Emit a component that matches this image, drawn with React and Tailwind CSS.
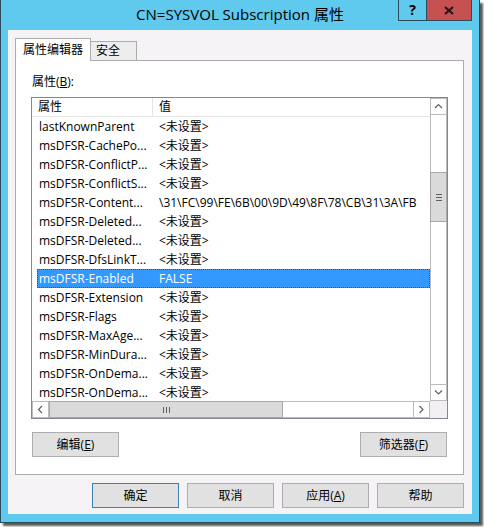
const rows = [
  ['lastKnownParent', '<未设置>'],
  ['msDFSR-CachePo...', '<未设置>'],
  ['msDFSR-ConflictP...', '<未设置>'],
  ['msDFSR-ConflictS...', '<未设置>'],
  ['msDFSR-Content...', '\\31\\FC\\99\\FE\\6B\\00\\9D\\49\\8F\\78\\CB\\31\\3A\\FB'],
  ['msDFSR-Deleted...', '<未设置>'],
  ['msDFSR-Deleted...', '<未设置>'],
  ['msDFSR-DfsLinkT...', '<未设置>'],
  ['msDFSR-Enabled', 'FALSE', true],
  ['msDFSR-Extension', '<未设置>'],
  ['msDFSR-Flags', '<未设置>'],
  ['msDFSR-MaxAge...', '<未设置>'],
  ['msDFSR-MinDura...', '<未设置>'],
  ['msDFSR-OnDema...', '<未设置>'],
  ['msDFSR-OnDema...', '<未设置>'],
];

const Chevron = ({ dir }) => {
  const pts = {
    up: '1,5 4.5,1.5 8,5',
    down: '1,1.5 4.5,5 8,1.5',
    left: '5,1 1.5,4.5 5,8',
    right: '1.5,1 5,4.5 1.5,8',
  }[dir];
  const w = dir === 'up' || dir === 'down' ? 9 : 7;
  const h = dir === 'up' || dir === 'down' ? 7 : 9;
  return (
    <svg width={w} height={h} viewBox={`0 0 ${w} ${h}`}>
      <polyline points={pts} fill="none" stroke="#606060" strokeWidth="1.2" />
    </svg>
  );
};

const Btn = ({ children, primary, className = '' }) => (
  <div
    className={`h-[25px] w-[87px] flex items-center justify-center bg-[#e1e1e1] border text-[12px] text-black ${
      primary ? 'border-[#3c7fb1]' : 'border-[#adadad]'
    } ${className}`}
  >
    {children}
  </div>
);

const App = () => {
  return (
    <div
      className="w-[484px] h-[527px] bg-white"
      style={{ fontFamily: "'Open Sans','Noto Sans CJK SC',sans-serif" }}
    >
      <div className="relative w-[480px] h-[523px] bg-[#5fc9ee] border-x border-b border-[#2b4d5e] shadow-[3px_3px_2px_rgba(0,0,0,0.65)] flex flex-col px-[7px]">
        {/* title bar */}
        <div className="h-[30px] flex items-center justify-center text-[15px] text-black pb-[1px]">
          CN=SYSVOL Subscription 属性
        </div>
        <div className="absolute top-0 right-[7px] flex">
          <div className="w-[28px] h-[21px] border-l border-b border-[#2b4d5e] flex items-center justify-center text-[14px] font-bold text-black pb-[1px]">
            ?
          </div>
          <div className="w-[46px] h-[21px] bg-[#c75050] border-x border-b border-[#2b4d5e] flex items-center justify-center">
            <svg width="10" height="9" viewBox="0 0 10 9">
              <path d="M1 1 L9 8 M9 1 L1 8" stroke="#1a1a1a" strokeWidth="2.2" />
            </svg>
          </div>
        </div>

        {/* client area */}
        <div className="w-[464px] h-[484px] bg-[#f6f3f6] flex flex-col pt-[8px]">
          {/* tabs */}
          <div className="flex items-start h-[22px] pl-[7px]">
            <div className="relative z-10 h-[23px] w-[76px] bg-white border-x border-t border-[#acacac] flex items-center pl-[7px] text-[12px] text-black">
              属性编辑器
            </div>
            <div className="mt-[3px] h-[19px] w-[46px] bg-[#eeedee] border-r border-t border-[#acacac] flex items-center pl-[5px] text-[12px] text-black">
              安全
            </div>
          </div>

          <div className="ml-[7px] w-[449px] h-[415px] bg-white border border-[#acacac] flex flex-col pt-[12px]">
            <div className="pl-[16px] leading-[18px] text-[12px] text-black">
              属性(<span className="underline">B</span>):
            </div>

            {/* list view */}
            <div className="ml-[15px] mt-[6px] w-[417px] h-[322px] border border-[#828790] flex flex-col">
              <div className="flex h-[303px]">
                <div className="w-[398px] flex flex-col overflow-hidden text-[12px] text-black">
                  <div className="h-[19px] shrink-0 flex border-b border-[#e5e5e5]">
                    <div className="w-[121px] border-r border-[#e5e5e5] pl-[6px] flex items-center">属性</div>
                    <div className="pl-[6px] flex items-center">值</div>
                  </div>
                  {rows.map(([name, value, selected], i) => (
                    <div key={i} className="h-[19px] shrink-0 pl-[5px] flex">
                      <div
                        className={`flex-1 flex items-center whitespace-nowrap overflow-hidden pt-px ${
                          selected ? 'bg-[#3399ff] text-white outline-1 outline-dotted outline-[#1e5a9a] -outline-offset-1' : ''
                        }`}
                      >
                        <div className="w-[116px] shrink-0 pl-[2px]">{name}</div>
                        <div className="pl-[6px]">{value}</div>
                      </div>
                    </div>
                  ))}
                </div>

                {/* vertical scrollbar */}
                <div className="w-[17px] flex flex-col">
                  <div className="h-[17px] border border-[#bcbcbc] flex items-center justify-center">
                    <Chevron dir="up" />
                  </div>
                  <div className="h-[57px] border-x border-[#bcbcbc]" />
                  <div className="h-[50px] bg-[#dadada] border border-[#a8a8a8] flex flex-col items-center justify-center gap-[2px]">
                    <div className="w-[6px] h-px bg-[#606060]" />
                    <div className="w-[6px] h-px bg-[#606060]" />
                    <div className="w-[6px] h-px bg-[#606060]" />
                  </div>
                  <div className="flex-1 border-x border-[#bcbcbc]" />
                  <div className="h-[17px] border border-[#bcbcbc] flex items-center justify-center">
                    <Chevron dir="down" />
                  </div>
                </div>
              </div>

              {/* horizontal scrollbar */}
              <div className="flex h-[17px]">
                <div className="w-[17px] border border-[#bcbcbc] flex items-center justify-center">
                  <Chevron dir="left" />
                </div>
                <div className="w-[234px] bg-[#dadada] border border-[#a8a8a8] flex items-center justify-center gap-[2px]">
                  <div className="w-px h-[6px] bg-[#606060]" />
                  <div className="w-px h-[6px] bg-[#606060]" />
                  <div className="w-px h-[6px] bg-[#606060]" />
                </div>
                <div className="flex-1 border-y border-[#bcbcbc]" />
                <div className="w-[17px] border border-[#bcbcbc] flex items-center justify-center">
                  <Chevron dir="right" />
                </div>
                <div className="w-[17px] bg-[#f2eff2]" />
              </div>
            </div>

            <div className="flex justify-between px-[16px] mt-[13px]">
              <Btn className="h-[24px]">
                编辑(<span className="underline">E</span>)
              </Btn>
              <Btn className="h-[24px]">
                筛选器(<span className="underline">F</span>)
              </Btn>
            </div>
          </div>

          {/* dialog buttons */}
          <div className="flex justify-end gap-[8px] pr-[8px] mt-[8px]">
            <Btn primary>确定</Btn>
            <Btn>取消</Btn>
            <Btn>
              应用(<span className="underline">A</span>)
            </Btn>
            <Btn>帮助</Btn>
          </div>
        </div>
      </div>
    </div>
  );
};

export default App;
